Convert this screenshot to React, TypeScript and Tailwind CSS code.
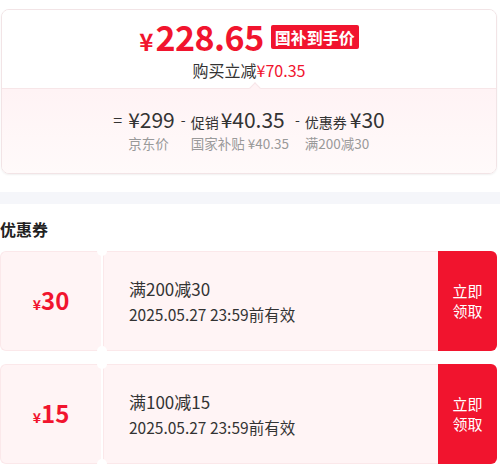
import React from "react";

const RED = "#f1142e";

function Coupon({ amount, title }: { amount: string; title: string }) {
  return (
    <div className="flex h-[100px] w-[497px]">
      <div className="relative flex w-[101px] items-center justify-center rounded-l-[6px] border border-r-0 border-[#fbe8ea] bg-[#fff4f5]">
        <span className="flex items-baseline font-semibold" style={{ color: RED }}>
          <span className="text-[14px]">¥</span>
          <span className="text-[24px] leading-none">{amount}</span>
        </span>
      </div>
      <div className="relative w-[2px] bg-white">
        <div className="absolute left-[-4px] top-[-5px] h-[10px] w-[10px] rounded-full bg-white" />
        <div className="absolute bottom-[-5px] left-[-4px] h-[10px] w-[10px] rounded-full bg-white" />
      </div>
      <div className="flex flex-1 flex-col justify-center border border-r-0 border-[#fbe8ea] bg-[#fff4f5] pl-[25px]">
        <div className="text-[17px] leading-[24px] text-[#333]">{title}</div>
        <div className="mt-[2px] text-[15.5px] leading-[22px] text-[#333]">2025.05.27 23:59前有效</div>
      </div>
      <div
        className="flex w-[59px] flex-col items-center justify-center rounded-r-[6px] text-[15px] leading-[20px] text-white"
        style={{ backgroundColor: RED }}
      >
        <span>立即</span>
        <span>领取</span>
      </div>
    </div>
  );
}

export default function App() {
  return (
    <div
      className="h-[470px] w-[500px] overflow-hidden bg-white"
      style={{ fontFamily: '"Noto Sans CJK SC", "Noto Sans", sans-serif' }}
    >
      <div className="ml-[1px] mt-[9px] w-[496px] overflow-hidden rounded-[8px] border border-[#f2e4e6] shadow-[0_1px_2px_rgba(0,0,0,0.06)]">
        <div className="flex h-[78px] flex-col items-center bg-white pt-[9px]">
          <div className="flex h-[36px] items-center">
            <span className="flex items-baseline font-semibold" style={{ color: RED }}>
              <span className="text-[24px] leading-none">¥</span>
              <span className="ml-[2px] text-[34px] leading-none tracking-[-0.5px]">228.65</span>
            </span>
            <span
              className="ml-[7px] rounded-[2px] px-[4px] text-[16px] font-bold leading-[24px] text-white"
              style={{ backgroundColor: RED }}
            >
              国补到手价
            </span>
          </div>
          <div className="mt-[4px] text-[16px] leading-[22px] text-[#333]">
            购买立减<span style={{ color: RED }}>¥70.35</span>
          </div>
        </div>
        <div className="relative h-[85px] border-t border-[#f7e6e8] bg-gradient-to-b from-[#fff3f5] to-[#fffafa]">
          <div className="absolute left-[249px] top-[-5px] h-[8px] w-[8px] rotate-45 border-l border-t border-[#f7e6e8] bg-[#fff3f5]" />
          <div className="flex justify-center pt-[16px] text-[#333]">
            <div className="flex">
              <span className="mr-[6px] mt-[2px] text-[16px] leading-[24px]">=</span>
              <div className="flex flex-col">
                <span className="text-[21px] leading-[28px]">¥299</span>
                <span className="mt-[1px] text-[13.5px] leading-[18px] text-[#999]">京东价</span>
              </div>
            </div>
            <div className="ml-[6px] flex">
              <span className="mr-[5px] mt-[2px] text-[14px] leading-[24px]">-</span>
              <div className="flex flex-col">
                <span className="flex items-baseline">
                  <span className="text-[14px]">促销</span>
                  <span className="ml-[2px] text-[21px] leading-[28px]">¥40.35</span>
                </span>
                <span className="mt-[1px] text-[13.5px] leading-[18px] text-[#999]">国家补贴 ¥40.35</span>
              </div>
            </div>
            <div className="ml-[6px] flex">
              <span className="mr-[5px] mt-[2px] text-[14px] leading-[24px]">-</span>
              <div className="flex flex-col">
                <span className="flex items-baseline">
                  <span className="text-[14px]">优惠券</span>
                  <span className="ml-[3px] text-[21px] leading-[28px]">¥30</span>
                </span>
                <span className="mt-[1px] text-[13.5px] leading-[18px] text-[#999]">满200减30</span>
              </div>
            </div>
          </div>
        </div>
      </div>
      <div className="mt-[18px] h-[12px] bg-[#f5f6fa]" />
      <div className="pb-[10px] pt-[13px] text-[16px] font-bold leading-[24px] text-[#222]">优惠券</div>
      <div className="flex flex-col gap-[13px]">
        <Coupon amount="30" title="满200减30" />
        <Coupon amount="15" title="满100减15" />
      </div>
    </div>
  );
}
